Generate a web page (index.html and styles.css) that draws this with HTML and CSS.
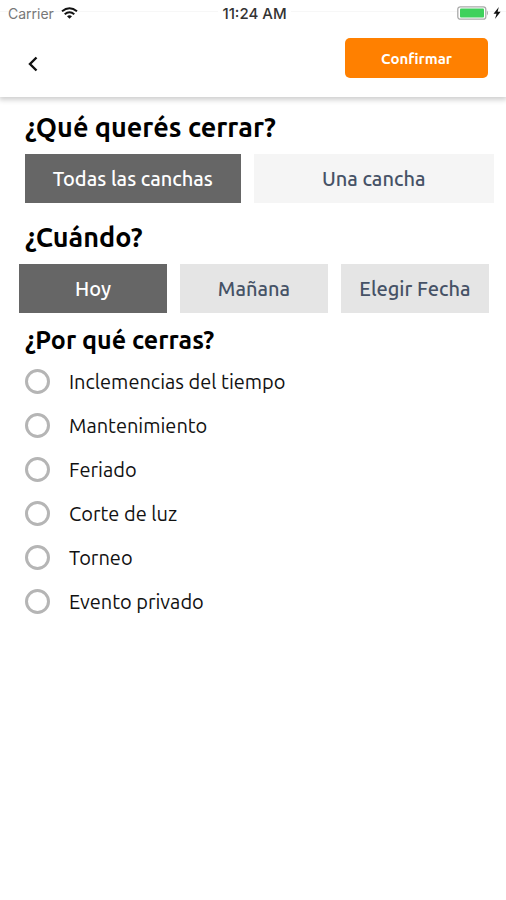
FILE: index.html
```html
<!DOCTYPE html>
<html lang="es">
<head>
<meta charset="utf-8">
<meta name="viewport" content="width=device-width, initial-scale=1">
<title>Cerrar canchas</title>
<link rel="stylesheet" href="styles.css">
</head>
<body>
<header class="header">
  <div class="status">
    <div class="carrier">
      <span>Carrier</span>
      <svg class="wifi" viewBox="0 0 17 12" aria-hidden="true">
        <path d="M1 4.3Q8.500-1.700 16 4.300M3.700 7.200Q8.500 3.200 13.300 7.200" fill="none" stroke="#111" stroke-width="2"/>
        <path d="M6 9.300Q8.500 7.300 11 9.300L8.500 11.800Z" fill="#111"/>
      </svg>
    </div>
    <time class="clock">11:24 AM</time>
    <div class="power">
      <svg class="battery" viewBox="0 0 32 14" aria-hidden="true">
        <rect x=".8" y=".8" width="28" height="12.400" rx="2.500" fill="#fff" stroke="#aaa" stroke-width="1.300"/>
        <rect x="3" y="2.500" width="24" height="9" rx="1" fill="#3fd15c"/>
        <path d="M30 4.500Q32 7 30 9.500Z" fill="#aaa"/>
      </svg>
      <svg class="bolt" viewBox="0 0 8 12" aria-hidden="true"><path d="M5.800 0L.5 6.800H3.500L2 12L7.600 4.800H4.600Z" fill="#111"/></svg>
    </div>
  </div>
  <div class="toolbar">
    <button class="back" type="button" aria-label="Volver">
      <svg viewBox="0 0 10 16" aria-hidden="true"><path d="M8.500 1.500L2 8L8.500 14.500" fill="none" stroke="#111" stroke-width="2.400"/></svg>
    </button>
    <button class="confirm" type="submit" form="closing">Confirmar</button>
  </div>
</header>
<main>
  <form id="closing" class="form">
    <h2 class="question">¿Qué querés cerrar?</h2>
    <div class="choices courts">
      <button class="choice selected" type="button">Todas las canchas</button>
      <button class="choice light" type="button">Una cancha</button>
    </div>
    <h2 class="question">¿Cuándo?</h2>
    <div class="choices days">
      <button class="choice selected" type="button">Hoy</button>
      <button class="choice" type="button">Mañana</button>
      <button class="choice" type="button">Elegir Fecha</button>
    </div>
    <fieldset class="reasons">
      <legend class="question small">¿Por qué cerras?</legend>
      <label class="reason"><input type="radio" name="reason">Inclemencias del tiempo</label>
      <label class="reason"><input type="radio" name="reason">Mantenimiento</label>
      <label class="reason"><input type="radio" name="reason">Feriado</label>
      <label class="reason"><input type="radio" name="reason">Corte de luz</label>
      <label class="reason"><input type="radio" name="reason">Torneo</label>
      <label class="reason"><input type="radio" name="reason">Evento privado</label>
    </fieldset>
  </form>
</main>
</body>
</html>
```
FILE: styles.css
```css
* { box-sizing: border-box; }

body {
  margin: 0;
  background: #fff;
  color: #111;
  font-family: Ubuntu, "Noto Sans", sans-serif;
}

button {
  margin: 0;
  padding: 0;
  border: 0;
  font-family: inherit;
  cursor: pointer;
}

.header {
  padding-bottom: 7px;
  background: #fff;
  box-shadow: 0 2px 5px 1px #d0d0d0;
}

.status {
  display: grid;
  grid-template-columns: 1fr auto 1fr;
  align-items: center;
  height: 26px;
  padding: 0 5px 0 8px;
  background: linear-gradient(#f7f7f7, #f7f7f7) 0 11px / 100% 1px no-repeat;
  font-family: Inter, "Liberation Sans", sans-serif;
  font-size: 14px;
}

.carrier {
  display: flex;
  align-items: center;
  gap: 7px;
  color: #777;
}

.wifi { width: 17px; height: 12px; }

.clock {
  padding: 0 4px;
  background: #fff;
  font-size: 15px;
  font-weight: 500;
  color: #333;
}

.power {
  display: flex;
  align-items: center;
  justify-content: flex-end;
  gap: 4px;
}

.battery { width: 32px; height: 14px; }
.bolt { width: 8px; height: 12px; }

.toolbar {
  display: flex;
  align-items: flex-start;
  justify-content: space-between;
  padding: 12px 18px 0 16px;
}

.back {
  display: grid;
  place-items: center;
  width: 34px;
  height: 52px;
  background: none;
}

.back svg { width: 10px; height: 16px; }

.confirm {
  width: 143px;
  height: 40px;
  border-radius: 5px;
  background: #ff8000;
  color: #fff;
  font-size: 15px;
  font-weight: 700;
}

.form { padding: 12px 12px 24px 19px; }

.question {
  margin: 0;
  padding: 0 6px;
  font-size: 27px;
  line-height: 36px;
  font-weight: 600;
  color: #000;
}

.question.small { font-size: 25px; }

.choices {
  display: grid;
  gap: 13px;
  margin-top: 9px;
}

.courts {
  grid-template-columns: 216fr 241fr;
  margin-bottom: 16px;
  padding-left: 6px;
}

.days {
  grid-template-columns: repeat(3, 1fr);
  padding-right: 5px;
}

.choice {
  height: 49px;
  background: #e5e5e5;
  color: #465266;
  font-size: 20px;
  font-weight: 500;
}

.choice.light { background: #f5f5f5; }

.choice.selected {
  background: #666;
  color: #fff;
}

.reasons {
  margin: 9px 0 0;
  padding: 0;
  border: 0;
}

.reasons legend { margin-bottom: 1px; }

.reason {
  display: flex;
  align-items: center;
  gap: 19px;
  height: 44px;
  padding-left: 6px;
  font-size: 20px;
}

.reason input {
  appearance: none;
  width: 25px;
  height: 25px;
  margin: 0;
  border: 3px solid #b5b5b5;
  border-radius: 50%;
}

.reason input:checked { border-width: 8px; border-color: #ff8000; }
```
